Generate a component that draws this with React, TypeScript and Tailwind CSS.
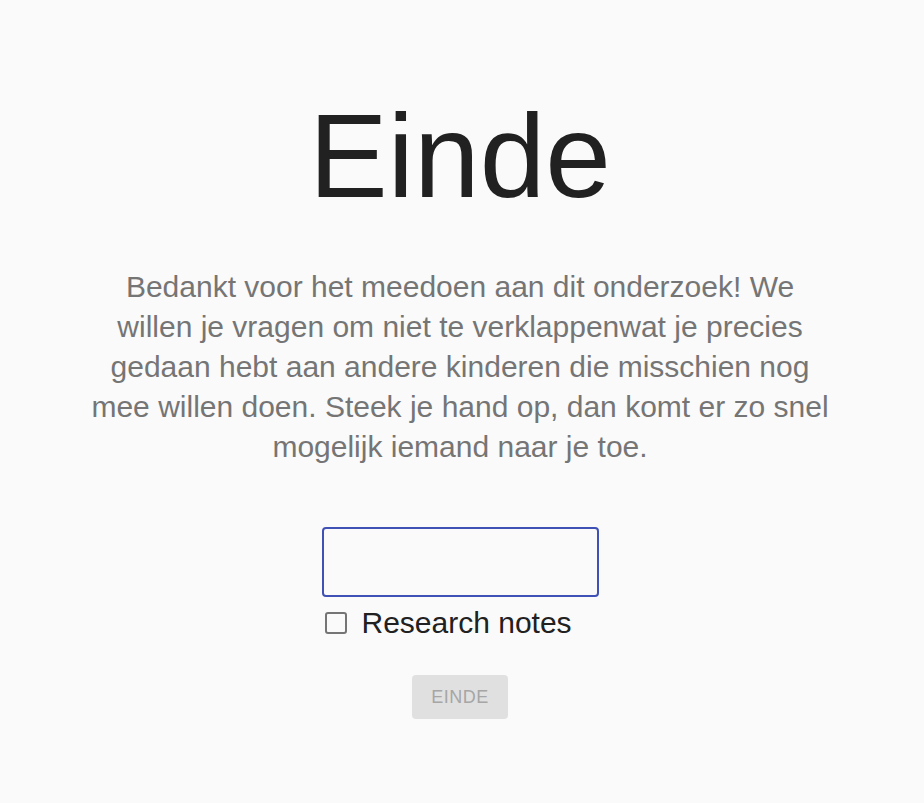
const App = () => {
  return (
    <div className="min-h-[803px] w-full bg-[#fafafa] pr-[4px] font-['Liberation_Sans',Arial,sans-serif]">
      <div className="mx-auto flex w-[740px] flex-col items-center pt-[76px] text-center">
        <h1 className="text-[118px] leading-[160px] font-normal text-[#212121]">Einde</h1>
        <p className="mt-[31px] text-[30px] leading-[40px] text-[#757575]">
          Bedankt voor het meedoen aan dit onderzoek! We willen je vragen om niet te verklappenwat je precies
          gedaan hebt aan andere kinderen die misschien nog mee willen doen. Steek je hand op, dan komt er zo snel
          mogelijk iemand naar je toe.
        </p>
        <div className="mt-[60px] flex flex-col items-start">
          <input
            type="text"
            className="h-[70px] w-[277px] rounded-[4px] border-2 border-[#3f51b5] bg-transparent px-3 outline-none"
          />
          <label className="mt-[8px] flex items-center gap-[15px] pl-[3px]">
            <span className="h-[22px] w-[22px] rounded-[3px] border-2 border-[#757575]" />
            <span className="text-[30px] leading-[36px] text-[#212121]">Research notes</span>
          </label>
        </div>
        <button
          disabled
          className="mt-[34px] h-[44px] w-[96px] rounded-[4px] bg-[#e0e0e0] text-[18px] tracking-[0.5px] text-[#a6a6a6]"
        >
          EINDE
        </button>
      </div>
    </div>
  );
};

export default App;
